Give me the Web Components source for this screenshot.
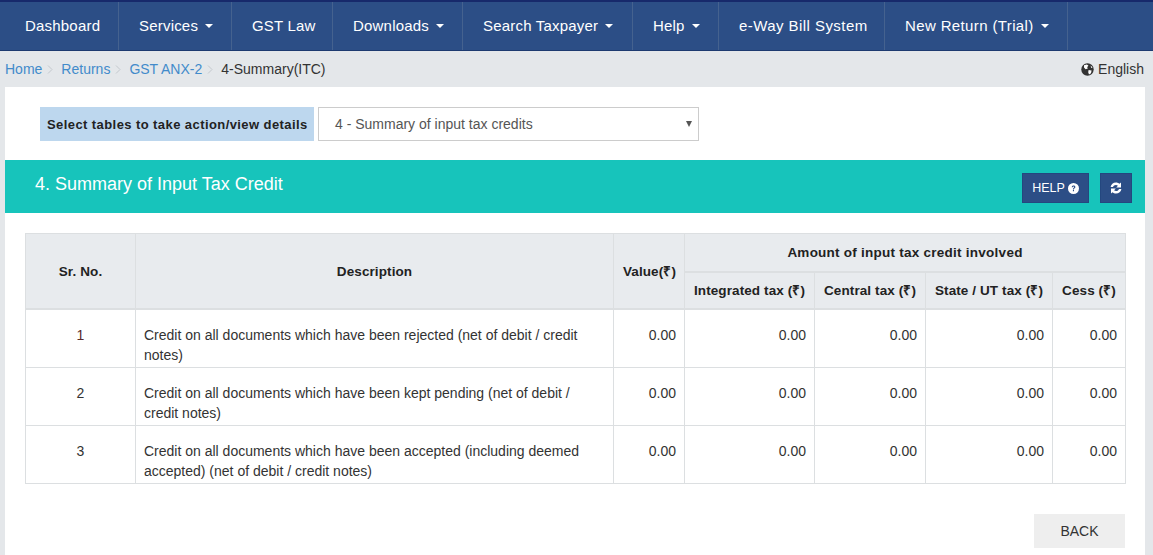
<!DOCTYPE html>
<html lang="en">
<head>
<meta charset="utf-8">
<title>4-Summary(ITC)</title>
<style>
  html, body {
    margin: 0;
    height: 555px;
    overflow: hidden;
    background: #e4e7ea;
    font-family: "Liberation Sans", Arial, sans-serif;
    color: #333;
  }
</style>
</head>
<body>
<gst-navbar></gst-navbar>
<gst-breadcrumb></gst-breadcrumb>
<gst-page>
  <gst-table-select></gst-table-select>
  <gst-section-header>4. Summary of Input Tax Credit</gst-section-header>
  <gst-summary-table></gst-summary-table>
  <gst-back-row></gst-back-row>
</gst-page>

<script>
class GstNavbar extends HTMLElement {
  constructor() {
    super();
    this.attachShadow({ mode: 'open' });
  }

  connectedCallback() {
    const items = [
      ['Dashboard', false, 119, 0.2],
      ['Services', true, 113, 0.2],
      ['GST Law', false, 101, 0.2],
      ['Downloads', true, 130, 0.2],
      ['Search Taxpayer', true, 170, 0.2],
      ['Help', true, 86, 0.2],
      ['e-Way Bill System', false, 166, 0.44],
      ['New Return (Trial)', true, 183, 0.37],
    ];
    const links = items.map(([label, caret, width, spacing]) => `
      <a style="width:${width}px;letter-spacing:${spacing}px">${label}${caret ? '<i></i>' : ''}</a>`).join('');
    this.shadowRoot.innerHTML = `
      <style>
        :host {
          display: block;
          height: 51px;
          background: #2c4e86;
          border-top: 2px solid #17296b;
          border-bottom: 1px solid #1d3a70;
          box-sizing: border-box;
        }
        nav {
          display: flex;
          height: 100%;
        }
        a {
          display: flex;
          align-items: center;
          box-sizing: border-box;
          height: 100%;
          padding: 0 0 2px 20px;
          border-right: 1px solid #45628f;
          color: #fff;
          font-size: 15px;
          white-space: nowrap;
        }
        a:first-child { padding-left: 25px; }
        i {
          display: inline-block;
          margin: 2px 0 0 7px;
          border-top: 4px solid #fff;
          border-left: 4px solid transparent;
          border-right: 4px solid transparent;
        }
      </style>
      <nav>${links}</nav>
    `;
  }
}

class GstBreadcrumb extends HTMLElement {
  constructor() {
    super();
    this.attachShadow({ mode: 'open' });
  }

  connectedCallback() {
    const chevron = '<svg width="6" height="9" viewBox="0 0 6 9"><path d="M1 .5 5 4.5 1 8.5" fill="none" stroke="#c3c8cd" stroke-width="1"/></svg>';
    this.shadowRoot.innerHTML = `
      <style>
        :host {
          display: flex;
          align-items: center;
          justify-content: space-between;
          height: 36px;
          padding: 0 9px 0 5px;
          font-size: 14px;
          color: #333;
        }
        .crumbs, .lang {
          display: flex;
          align-items: center;
        }
        a { color: #428bca; }
        .crumbs svg { margin: 1px 8px 0 5px; }
        .lang svg { margin-right: 4px; }
      </style>
      <div class="crumbs">
        <a>Home</a>${chevron}
        <a>Returns</a>${chevron}
        <a>GST ANX-2</a>${chevron}
        <span>4-Summary(ITC)</span>
      </div>
      <div class="lang">
        <svg width="13" height="13" viewBox="0 0 13 13">
          <circle cx="6.5" cy="6.5" r="6.2" fill="#333"/>
          <path d="M3 2.2 5.8 1.4 7.4 2.6 6.2 4.2 6.8 5.6 4.6 6.2 3 4.6ZM7.6 7 10.6 7.4 10 10.2 8 11.6 7.2 9.2ZM9.6 2.6 11.6 4.4 10.2 5Z" fill="#fff"/>
        </svg>
        <span>English</span>
      </div>
    `;
  }
}

class GstPage extends HTMLElement {
  constructor() {
    super();
    this.attachShadow({ mode: 'open' });
    this.shadowRoot.innerHTML = `
      <style>
        :host {
          display: block;
          margin: 0 8px 0 5px;
          height: 468px;
          background: #fff;
        }
      </style>
      <slot></slot>
    `;
  }
}

class GstTableSelect extends HTMLElement {
  constructor() {
    super();
    this.attachShadow({ mode: 'open' });
    this.shadowRoot.innerHTML = `
      <style>
        :host {
          display: flex;
          gap: 4px;
          height: 34px;
          padding: 20px 0 19px 35px;
        }
        label {
          display: flex;
          align-items: center;
          width: 274px;
          box-sizing: border-box;
          padding-left: 7px;
          background: #bdd7ee;
          color: #222;
          font-size: 13px;
          font-weight: bold;
          letter-spacing: 0.42px;
          white-space: nowrap;
        }
        .select {
          position: relative;
          display: flex;
          align-items: center;
          width: 381px;
          box-sizing: border-box;
          padding-left: 16px;
          border: 1px solid #ccc;
          color: #555;
          font-size: 14px;
        }
        .select svg {
          position: absolute;
          right: 6px;
          top: 13px;
        }
      </style>
      <label>Select tables to take action/view details</label>
      <div class="select">
        4 - Summary of input tax credits
        <svg width="6" height="6" viewBox="0 0 6 6"><path d="M0 0H6L3 6Z" fill="#555"/></svg>
      </div>
    `;
  }
}

class GstSectionHeader extends HTMLElement {
  constructor() {
    super();
    this.attachShadow({ mode: 'open' });
    this.shadowRoot.innerHTML = `
      <style>
        :host {
          display: flex;
          justify-content: space-between;
          height: 53px;
          box-sizing: border-box;
          padding: 13px 13px 0 30px;
          background: #17c4bb;
          color: #fff;
          font-size: 18px;
        }
        h4 {
          margin: 0;
          font: inherit;
          line-height: 22px;
        }
        .actions {
          display: flex;
          gap: 11px;
        }
        button {
          display: flex;
          align-items: center;
          justify-content: center;
          gap: 3px;
          height: 30px;
          margin: 0;
          padding: 0;
          box-sizing: border-box;
          background: #2c4e86;
          border: 1px solid #24477f;
          color: #fff;
          font: 12.5px "Liberation Sans", Arial, sans-serif;
        }
        .help { width: 67px; }
        .refresh { width: 32px; }
      </style>
      <h4><slot></slot></h4>
      <div class="actions">
        <button class="help">HELP
          <svg width="11" height="11" viewBox="0 0 11 11">
            <circle cx="5.5" cy="5.5" r="5.5" fill="#fff"/>
            <path d="M3.7 4.2C3.8 3 4.6 2.5 5.6 2.5 6.7 2.5 7.4 3.1 7.4 4 7.4 5.2 5.9 5.2 5.9 6.4H4.9C4.9 4.9 6.2 4.9 6.2 4.1 6.2 3.7 6 3.5 5.5 3.5 5.1 3.5 4.9 3.8 4.8 4.3ZM4.9 7H6V8.2H4.9Z" fill="#2c4e86"/>
          </svg>
        </button>
        <button class="refresh" aria-label="Refresh">
          <svg width="12" height="12" viewBox="0 0 12 12">
            <path d="M.6 5C1 2.2 3.2.4 5.9.4 7.4.4 8.6 1 9.5 1.8L11 .4V5.4H6.2L7.9 3.7C7.4 3.2 6.7 2.9 5.9 2.9 4.5 2.9 3.4 3.7 3 5ZM11.4 7C11 9.8 8.8 11.6 6.1 11.6 4.6 11.6 3.4 11 2.5 10.2L1 11.6V6.6H5.8L4.1 8.3C4.6 8.8 5.3 9.1 6.1 9.1 7.5 9.1 8.6 8.3 9 7Z" fill="#fff"/>
          </svg>
        </button>
      </div>
    `;
  }
}

class GstSummaryTable extends HTMLElement {
  constructor() {
    super();
    this.attachShadow({ mode: 'open' });
  }

  connectedCallback() {
    const rows = [
      ['1', 'Credit on all documents which have been rejected (net of debit / credit notes)', '#5a2c2c'],
      ['2', 'Credit on all documents which have been kept pending (net of debit / credit notes)', '#333'],
      ['3', 'Credit on all documents which have been accepted (including deemed accepted) (net of debit / credit notes)', '#333'],
    ];
    const body = rows.map(([no, text, color]) => `
      <tr>
        <td class="c" style="color:${color}">${no}</td>
        <td>${text}</td>
        <td class="r">0.00</td>
        <td class="r">0.00</td>
        <td class="r">0.00</td>
        <td class="r">0.00</td>
        <td class="r">0.00</td>
      </tr>`).join('');
    this.shadowRoot.innerHTML = `
      <style>
        :host {
          display: block;
          padding: 20px 20px 0 20px;
        }
        table {
          width: 1100px;
          table-layout: fixed;
          border-collapse: collapse;
          font-size: 14px;
          color: #333;
        }
        th, td {
          box-sizing: border-box;
          border: 1px solid #dcdfe1;
          padding: 0 8px;
          line-height: 20px;
        }
        th {
          padding-top: 2px;
          background: #e8ebee;
          color: #222;
          font-size: 13.5px;
          letter-spacing: 0.1px;
          text-align: center;
          white-space: nowrap;
        }
        th[colspan] { letter-spacing: 0.25px; }
        thead tr:nth-child(1) th { height: 38px; }
        thead tr:nth-child(2) th { height: 37px; border-top-width: 2px; }
        thead { border-bottom: 2px solid #dcdfe1; }
        td {
          height: 58px;
          padding-top: 15px;
          vertical-align: top;
        }
        tbody tr:first-child td { height: 59px; }
        .c { text-align: center; }
        .r { text-align: right; }
        th.value { text-align: right; }
      </style>
      <table>
        <colgroup>
          <col style="width:110px"><col style="width:478px"><col style="width:71px">
          <col style="width:130px"><col style="width:111px"><col style="width:127px"><col style="width:73px">
        </colgroup>
        <thead>
          <tr>
            <th rowspan="2">Sr. No.</th>
            <th rowspan="2">Description</th>
            <th rowspan="2" class="value">Value(₹)</th>
            <th colspan="4">Amount of input tax credit involved</th>
          </tr>
          <tr>
            <th>Integrated tax (₹)</th>
            <th>Central tax (₹)</th>
            <th>State / UT tax (₹)</th>
            <th>Cess (₹)</th>
          </tr>
        </thead>
        <tbody>${body}</tbody>
      </table>
    `;
  }
}

class GstBackRow extends HTMLElement {
  constructor() {
    super();
    this.attachShadow({ mode: 'open' });
    this.shadowRoot.innerHTML = `
      <style>
        :host {
          display: flex;
          justify-content: flex-end;
          padding: 30px 20px 0 0;
        }
        button {
          width: 91px;
          height: 34px;
          padding: 0;
          border: 0;
          background: #eee;
          color: #333;
          font: 14px "Liberation Sans", Arial, sans-serif;
        }
      </style>
      <button>BACK</button>
    `;
  }
}

customElements.define('gst-navbar', GstNavbar);
customElements.define('gst-breadcrumb', GstBreadcrumb);
customElements.define('gst-page', GstPage);
customElements.define('gst-table-select', GstTableSelect);
customElements.define('gst-section-header', GstSectionHeader);
customElements.define('gst-summary-table', GstSummaryTable);
customElements.define('gst-back-row', GstBackRow);
</script>
</body>
</html>
